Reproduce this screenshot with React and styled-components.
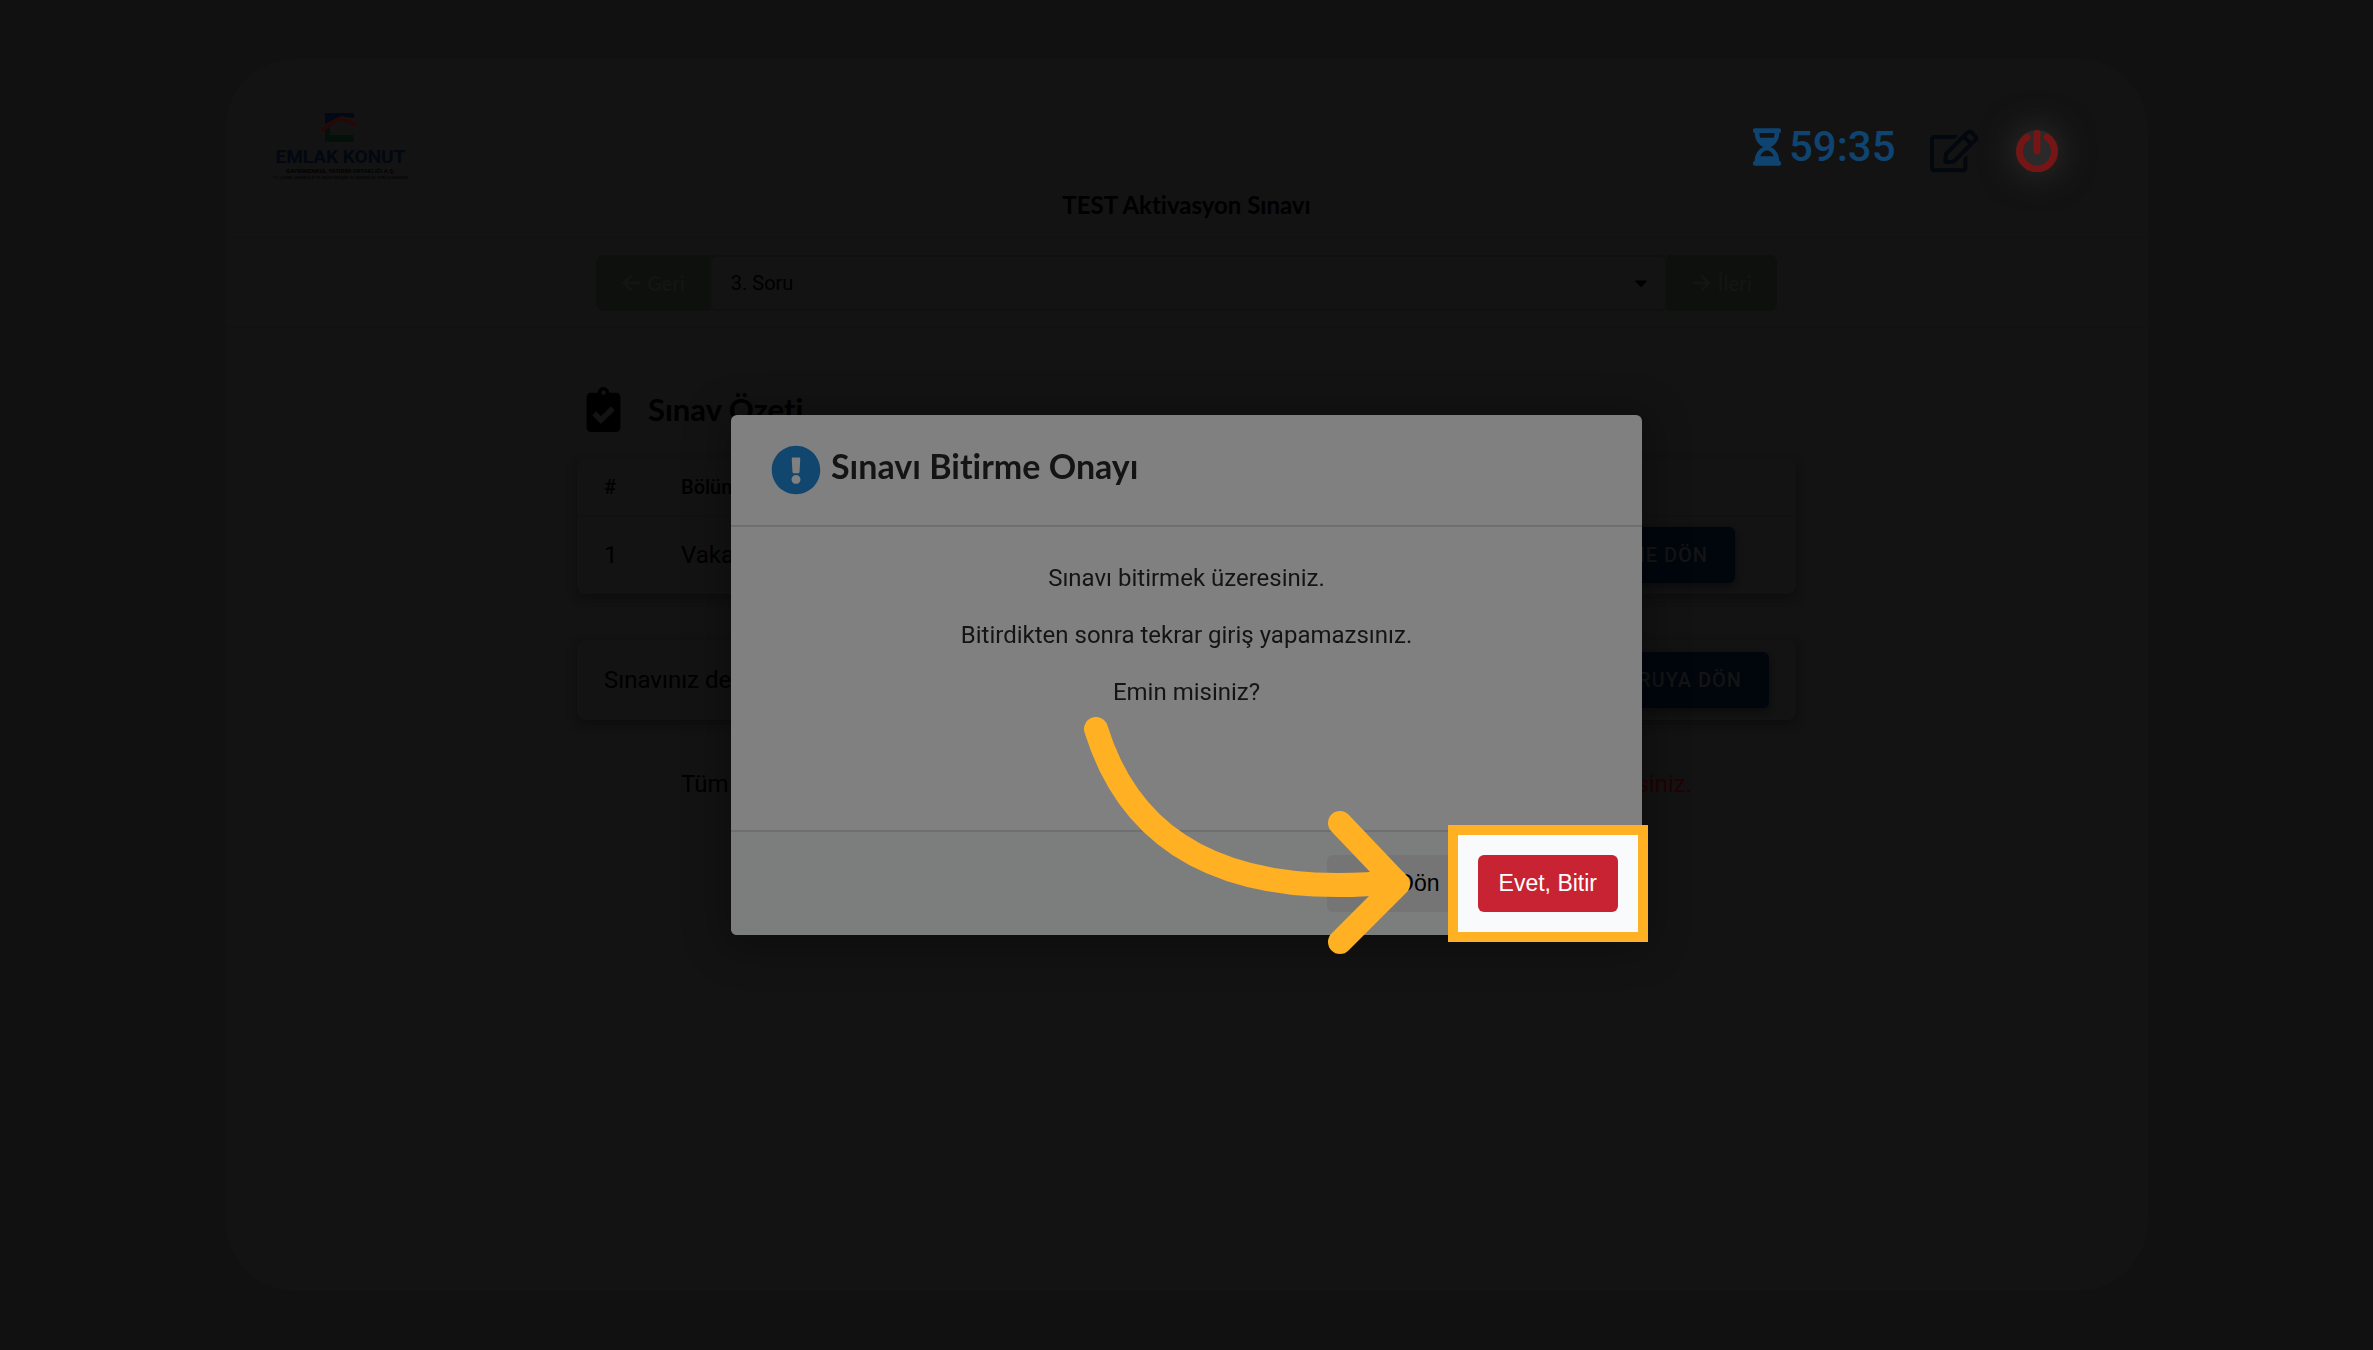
import React from "react";
import styled, { createGlobalStyle } from "styled-components";
import {
  FaArrowLeft,
  FaArrowRight,
  FaCaretDown,
  FaClipboardCheck,
  FaExclamationCircle,
  FaHourglassHalf,
  FaRegEdit,
} from "react-icons/fa";

function App() {
  return (
    <Page>
      <GlobalStyle />
      <Panel>
        <Header>
          <HeaderRow>
            <Logo />
            <HeaderTools>
              <Timer>
                <HourglassIcon />
                59:35
              </Timer>
              <IconButton aria-label="Notlar">
                <FaRegEdit size={48} />
              </IconButton>
              <PowerButton aria-label="Sınavı Bitir">
                <PowerIcon viewBox="0 0 42 42">
                  <path d="M11 7.2A17.4 17.4 0 1 0 31 7.2M21 3.5V21" />
                </PowerIcon>
              </PowerButton>
            </HeaderTools>
          </HeaderRow>
          <ExamTitle>TEST Aktivasyon Sınavı</ExamTitle>
        </Header>

        <QuestionNav>
          <NavButton $side="left">
            <FaArrowLeft size={20} /> Geri
          </NavButton>
          <SelectWrap>
            <QuestionSelect aria-label="Soru" defaultValue="3">
              <option value="3">3. Soru</option>
            </QuestionSelect>
            <SelectCaret />
          </SelectWrap>
          <NavButton $side="right">
            <FaArrowRight size={20} /> İleri
          </NavButton>
        </QuestionNav>

        <Content>
          <SectionTitle>
            <FaClipboardCheck size={45} />
            Sınav Özeti
          </SectionTitle>
          <Card>
            <SummaryTable>
              <thead>
                <tr>
                  <th>#</th>
                  <th>Bölüm</th>
                  <th />
                </tr>
              </thead>
              <tbody>
                <tr>
                  <td>1</td>
                  <td>Vaka</td>
                  <ActionCell>
                    <BlueButton>BÖLÜME DÖN</BlueButton>
                  </ActionCell>
                </tr>
              </tbody>
            </SummaryTable>
          </Card>
          <Card>
            <StatusRow>
              Sınavınız devam ediyor.
              <BlueButton>SORUYA DÖN</BlueButton>
            </StatusRow>
          </Card>
          <Note>
            <span>Tüm soruları cevapladıysanız</span>
            <NoteWarning>sınavı bitirebilirsiniz.</NoteWarning>
          </Note>
        </Content>
      </Panel>

      <Overlay>
        <Modal role="dialog" aria-labelledby="modal-title">
          <ModalHeader>
            <FaExclamationCircle size={50} />
            <ModalTitle id="modal-title">Sınavı Bitirme Onayı</ModalTitle>
          </ModalHeader>
          <ModalBody>
            <p>Sınavı bitirmek üzeresiniz.</p>
            <p>Bitirdikten sonra tekrar giriş yapamazsınız.</p>
            <p>Emin misiniz?</p>
          </ModalBody>
          <ModalFooter>
            <ModalButton>Geri Dön</ModalButton>
            <Highlight>
              <ModalButton $danger>Evet, Bitir</ModalButton>
            </Highlight>
          </ModalFooter>
          <Arrow viewBox="0 0 327 238" aria-hidden="true">
            <path d="M12 12C38 96 107 186 312 165" />
            <path d="M256 106L314 167L256 225" />
          </Arrow>
        </Modal>
      </Overlay>
    </Page>
  );
}

function Logo() {
  return (
    <LogoWrap>
      <svg width="36" height="30" viewBox="0 0 36 30">
        <path d="M3 0H32V5L19 3L3 11Z" fill="#020915" />
        <path d="M3 17L8 14V22H32V29H3Z" fill="#04110a" />
        <path
          d="M1 17C8 11 12 8 18 6C24 7 28 9 34 12"
          fill="none"
          stroke="#2a0707"
          strokeWidth="3"
          strokeLinecap="round"
        />
      </svg>
      <LogoName>EMLAK KONUT</LogoName>
      <LogoLine>GAYRİMENKUL YATIRIM ORTAKLIĞI A.Ş.</LogoLine>
      <LogoSmall>
        T.C. ÇEVRE, ŞEHİRCİLİK VE İKLİM DEĞİŞİKLİĞİ BAKANLIĞI TOKİ İŞTİRAKİDİR
      </LogoSmall>
    </LogoWrap>
  );
}

export default App;

const GlobalStyle = createGlobalStyle`
  * {
    box-sizing: border-box;
  }

  body {
    margin: 0;
    background-color: #111111;
    color: #000000;
    font-family: Roboto, sans-serif;
    font-size: 24px;
    font-variant-ligatures: none;
  }

  button {
    border: none;
    cursor: pointer;
  }
`;

const Page = styled.div`
  min-height: 100vh;
  padding: 59px 0;
`;

const Panel = styled.main`
  width: 81%;
  min-height: calc(100vh - 118px);
  margin: 0 auto;
  border-radius: 70px;
  background-color: #131313;
`;

const Header = styled.header`
  padding: 46px 50px 16px;
  border-bottom: 1px solid #111111;
`;

const HeaderRow = styled.div`
  display: flex;
  justify-content: space-between;
  height: 84px;
`;

const LogoWrap = styled.div`
  display: flex;
  flex-direction: column;
  align-items: center;
  width: 130px;
  padding-top: 8px;
`;

const LogoName = styled.div`
  margin-top: 4px;
  color: #020711;
  font-size: 19px;
  font-weight: 700;
  line-height: 20px;
  white-space: nowrap;
`;

const LogoLine = styled.div`
  font-size: 6px;
  font-weight: 500;
  line-height: 8px;
  white-space: nowrap;
`;

const LogoSmall = styled.div`
  font-size: 4px;
  line-height: 6px;
  white-space: nowrap;
`;

const HeaderTools = styled.div`
  display: flex;
  align-items: center;
  padding: 8px 40px 0 0;
`;

const Timer = styled.div`
  display: flex;
  align-items: center;
  gap: 8px;
  margin-right: 34px;
  padding-bottom: 8px;
  color: #104470;
  font-size: 42px;
  font-weight: 500;
  line-height: 48px;
`;

const HourglassIcon = styled(FaHourglassHalf)`
  width: 28px;
  height: 38px;
`;

const IconButton = styled.button`
  display: flex;
  padding: 0;
  background: none;
  color: #02080e;
`;

const PowerButton = styled(IconButton)`
  margin-left: 38px;
  border-radius: 50%;
  background-color: #2a2a2a;
  box-shadow: 0 0 32px 4px #2a2a2a;
`;

const PowerIcon = styled.svg`
  width: 42px;
  height: 42px;
  fill: none;
  stroke: #751515;
  stroke-width: 7px;
  stroke-linecap: round;
`;

const ExamTitle = styled.h1`
  margin: 0;
  font-family: Lato, sans-serif;
  font-size: 24px;
  font-weight: 700;
  line-height: 32px;
  text-align: center;
`;

const QuestionNav = styled.nav`
  display: flex;
  justify-content: center;
  padding: 17px 0 16px;
  border-bottom: 1px solid #111111;
`;

const NavButton = styled.button`
  display: flex;
  align-items: center;
  gap: 6px;
  height: 56px;
  padding: 0 25px;
  border-radius: ${({ $side }) =>
    $side === "left" ? "8px 0 0 8px" : "0 8px 8px 0"};
  background-color: #0d100c;
  color: #131515;
  font-family: Lato, sans-serif;
  font-size: 20px;
  font-weight: 700;
`;

const SelectWrap = styled.div`
  position: relative;
  width: 957px;
`;

const QuestionSelect = styled.select`
  width: 100%;
  height: 56px;
  padding: 0 19px;
  appearance: none;
  border: 2px solid #101010;
  border-radius: 6px;
  background-color: #131313;
  color: #000000;
  font-family: Roboto, sans-serif;
  font-size: 20px;
`;

const SelectCaret = styled(FaCaretDown)`
  position: absolute;
  top: 18px;
  right: 18px;
  width: 16px;
  height: 20px;
  pointer-events: none;
`;

const Content = styled.section`
  max-width: 1219px;
  margin: 0 auto;
  padding-top: 58px;
`;

const SectionTitle = styled.h2`
  display: flex;
  align-items: center;
  gap: 22px;
  margin: 0 0 27px;
  padding-left: 4px;
  font-family: Lato, sans-serif;
  font-size: 31px;
  font-weight: 700;
  line-height: 46px;
`;

const Card = styled.div`
  margin-bottom: 46px;
  border-radius: 8px;
  background-color: #131313;
  box-shadow: 0 4px 8px 1px #0e0e0e;
`;

const SummaryTable = styled.table`
  width: 100%;
  border-collapse: collapse;

  th {
    height: 57px;
    padding: 0 0 0 27px;
    border-bottom: 1px solid #101010;
    font-size: 20px;
    font-weight: 500;
    text-align: left;
  }

  td {
    height: 78px;
    padding: 0 0 0 27px;
  }

  th:first-child {
    width: 77px;
  }
`;

const ActionCell = styled.td`
  text-align: right;

  && {
    padding-right: 61px;
  }
`;

const BlueButton = styled.button`
  height: 56px;
  padding: 0 27px;
  border-radius: 6px;
  background-color: #01060d;
  box-shadow: 0 3px 6px #0c0c0c;
  color: #141414;
  font-family: Roboto, sans-serif;
  font-size: 20px;
  font-weight: 500;
  letter-spacing: 1px;
`;

const StatusRow = styled.div`
  display: flex;
  align-items: center;
  justify-content: space-between;
  height: 80px;
  padding: 0 27px;
`;

const Note = styled.p`
  display: flex;
  justify-content: space-between;
  margin: 50px 104px 0;
  line-height: 28px;
`;

const NoteWarning = styled.span`
  color: #220202;
`;

const Overlay = styled.div`
  position: fixed;
  inset: 0;
  display: flex;
  align-items: center;
  justify-content: center;
`;

const Modal = styled.section`
  position: relative;
  display: flex;
  flex-direction: column;
  width: 911px;
  min-height: 520px;
  border-radius: 6px;
  background-color: #808080;
  box-shadow: 0 6px 40px 8px rgba(0, 0, 0, 0.3);
  color: #141414;
`;

const ModalHeader = styled.header`
  display: flex;
  align-items: center;
  gap: 10px;
  height: 112px;
  padding: 0 40px;
  border-bottom: 2px solid #6f6f6f;

  svg {
    color: #11466f;
  }
`;

const ModalTitle = styled.h2`
  margin: 0;
  padding-bottom: 8px;
  font-family: Lato, sans-serif;
  font-size: 34px;
  font-weight: 700;
  line-height: 44px;
`;

const ModalBody = styled.div`
  flex: 1;
  padding: 37px 40px 36px;
  text-align: center;

  p {
    margin: 0 0 29px;
    line-height: 28px;
  }
`;

const ModalFooter = styled.footer`
  display: flex;
  justify-content: flex-end;
  gap: 17px;
  padding: 23px 24px;
  border-top: 2px solid #6f6f6f;
  border-radius: 0 0 6px 6px;
  background-color: #7c7e7d;
`;

const ModalButton = styled.button`
  position: relative;
  height: 57px;
  padding: 0 21px;
  border-radius: 6px;
  background-color: ${({ $danger }) => ($danger ? "#c82333" : "#757575")};
  color: ${({ $danger }) => ($danger ? "#ffffff" : "#000000")};
  font-family: "Liberation Sans", Arial, sans-serif;
  font-size: 23px;
`;

const Highlight = styled.div`
  position: relative;

  &:before {
    content: "";
    position: absolute;
    inset: -30px;
    border: 10px solid #ffb023;
    background-color: #f9fafc;
  }
`;

const Arrow = styled.svg`
  position: absolute;
  right: 231px;
  bottom: -20px;
  width: 327px;
  height: 238px;
  fill: none;
  stroke: #ffb023;
  stroke-width: 24px;
  stroke-linecap: round;
  stroke-linejoin: round;
`;
